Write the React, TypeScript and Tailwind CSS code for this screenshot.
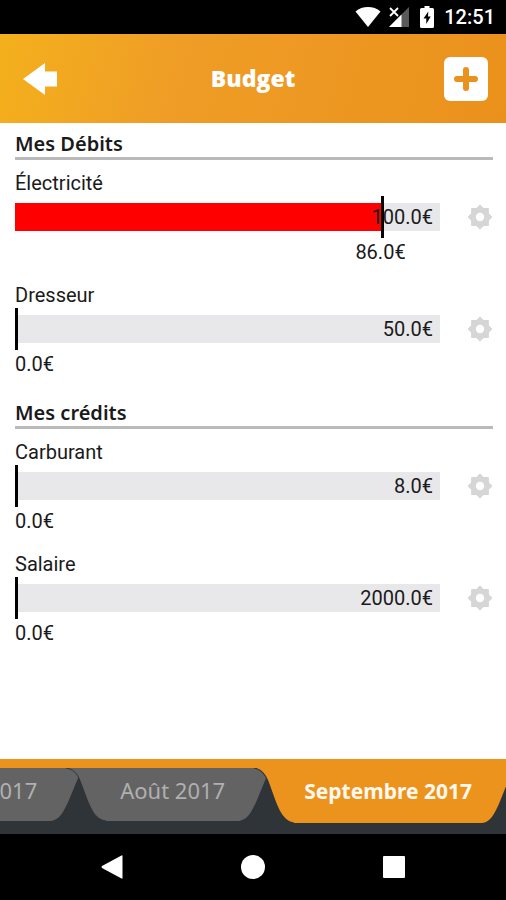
import {useState} from "react";

type Budget = {
    name: string;
    spent: number;
    limit: number;
}

const debits: Budget[] = [
    { name: "Électricité", spent: 86, limit: 100 },
    { name: "Dresseur", spent: 0, limit: 50 },
];

const credits: Budget[] = [
    { name: "Carburant", spent: 0, limit: 8 },
    { name: "Salaire", spent: 0, limit: 2000 },
];

const months = ["Juillet 2017", "Août 2017", "Septembre 2017"];

const formatAmount = (value: number) => `${value.toFixed(1)}€`;

const StatusBar = () => (
    <div className="flex h-[34px] items-center justify-end bg-black pr-[11px] text-white">
        <svg className="mr-2 h-5 w-[26px]" viewBox="0 0 26 20" fill="currentColor">
            <path d="M13 20 0.5 4.500C4 1.400 8.300 0 13 0s9 1.400 12.500 4.500z" />
        </svg>
        <svg className="mr-[11px] h-5 w-5" viewBox="0 0 20 20">
            <path d="M20 0v20H0z" fill="#5a5a5a" />
            <path d="M12.500 7.500V20H0z" fill="currentColor" />
            <path d="M-1-1h11v10H-1z" fill="#000" />
            <path d="M1 1l8 8M9 1L1 9" stroke="currentColor" strokeWidth="1.800" />
        </svg>
        <svg className="mr-[10px] h-[22px] w-[14px]" viewBox="0 0 14 22">
            <path d="M4.500 0h5v2H12.500q1.500 0 1.500 1.500V20.500q0 1.500-1.500 1.500h-11Q0 22 0 20.500V3.500Q0 2 1.500 2h3z" fill="currentColor" />
            <path d="M8.300 5.500 3.500 12.500H6.300v5.500L10.700 10.500H8z" fill="#000" />
        </svg>
        <span className="text-xl font-medium">12:51</span>
    </div>
);

const Header = () => (
    <header className="flex h-[89px] items-center justify-between bg-linear-[105deg] from-[#f4b01c] via-[#ef9d26] via-35% to-[#ea911c] px-[18px] text-white">
        <button type="button" aria-label="Retour" className="flex h-11 w-11 cursor-pointer items-center justify-center">
            <svg className="h-8 w-[34px]" viewBox="0 0 34 32" fill="currentColor">
                <path d="M0 16 22 0v8.500h12v15H22V32z" />
            </svg>
        </button>
        <h1 className="font-['Open_Sans','Noto_Sans',sans-serif] text-[23px] font-extrabold">Budget</h1>
        <button type="button" aria-label="Ajouter" className="flex h-11 w-11 cursor-pointer items-center justify-center rounded-md bg-white text-[#ea921e]">
            <svg className="h-6 w-6" viewBox="0 0 24 24" fill="none" stroke="currentColor" strokeWidth="6" strokeLinecap="round">
                <path d="M12 3v18M3 12h18" />
            </svg>
        </button>
    </header>
);

const Gear = () => (
    <svg className="h-[26px] w-[26px]" viewBox="-13 -13 26 26" fill="#d6d6d6">
        <rect x="-8.900" y="-8.900" width="17.800" height="17.800" rx="0.500" />
        <rect x="-8.900" y="-8.900" width="17.800" height="17.800" rx="0.500" transform="rotate(45)" />
        <circle r="4.200" fill="#fff" />
    </svg>
);

const BudgetRow = ({ name, spent, limit }: Budget) => {
    const percent = Math.min(100, (spent / limit) * 100);

    return (
        <li className="flex items-center gap-[27px]">
            <div className="flex-1">
                <div className="h-6 text-xl/[22px]">{name}</div>
                <div className="relative flex h-[42px] items-center">
                    <div
                        role="progressbar"
                        aria-label={name}
                        aria-valuenow={spent}
                        aria-valuemax={limit}
                        className="h-7 w-full bg-[#e8e8ea]"
                    >
                        <div className="h-full bg-[#ff0000]" style={{ width: `${percent}%` }} />
                    </div>
                    <span className="absolute right-[7px] text-xl">{formatAmount(limit)}</span>
                    <div className="absolute inset-y-0 w-[3px] bg-black" style={{ left: `${percent}%` }} />
                </div>
                <div className="flex h-7 items-center">
                    <span
                        className={percent > 0 ? "-translate-x-1/2 text-xl" : "text-xl"}
                        style={{ marginLeft: `${percent}%` }}
                    >
                        {formatAmount(spent)}
                    </span>
                </div>
            </div>
            <button type="button" aria-label={`Modifier ${name}`} className="cursor-pointer pb-1">
                <Gear />
            </button>
        </li>
    )
}

const BudgetSection = ({ title, budgets }: { title: string; budgets: Budget[] }) => (
    <section>
        <h2 className="border-b-3 border-[#bababa] font-['Noto_Sans',sans-serif] text-xl/[26px] font-semibold">{title}</h2>
        <ul className="mt-3 flex flex-col gap-[18px]">
            {budgets.map((budget) => (
                <BudgetRow key={budget.name} {...budget} />
            ))}
        </ul>
    </section>
);

const MonthTab = ({ label, active, onClick }: { label: string; active: boolean; onClick: () => void }) => (
    <button
        type="button"
        role="tab"
        aria-selected={active}
        onClick={onClick}
        className={active
            ? "-ml-[13px] flex h-[55px] shrink-0 cursor-pointer text-[21px] font-bold text-[#ec931e]"
            : "-ml-[13px] flex h-[53px] shrink-0 cursor-pointer text-[22px] text-[#636363]"}
    >
        <svg className="h-full w-10" viewBox="0 0 40 54" preserveAspectRatio="none" fill="currentColor">
            <path d="M0 0C7 1 11 5 14 13L21 32C26 45 31 53 40 54V0z" />
            <path d="M0 0C7 1 11 5 14 13L21 32C26 45 31 53 40 54" fill="none" stroke="#2f3438" />
        </svg>
        <span className={active
            ? "flex h-full items-center bg-[#ec931e] px-2.5 pb-2 text-[#fff8ee]"
            : "flex h-full items-center bg-[#636363] px-3.5 pb-2 text-[#b0b0b0]"}
        >
            {label}
        </span>
        <svg className="h-full w-7" viewBox="0 0 28 54" preserveAspectRatio="none" fill="currentColor">
            <path d="M0 54C8 53 12 46 17 35L28 8V0H0z" />
        </svg>
    </button>
);

const App = () => {
    const [month, setMonth] = useState("Septembre 2017");

    return (
        <div className="flex min-h-screen flex-col bg-white font-[Roboto,sans-serif] text-[#1a1a1a]">
            <StatusBar />
            <Header />
            <main className="flex flex-1 flex-col gap-[22px] pt-2 pr-[13px] pl-[15px]">
                <BudgetSection title="Mes Débits" budgets={debits} />
                <BudgetSection title="Mes crédits" budgets={credits} />
            </main>
            <div className="overflow-hidden border-t-9 border-[#ec931e] bg-[#2f3438]">
                <div role="tablist" className="-mr-1 flex h-[66px] items-start justify-end font-['Noto_Sans',sans-serif]">
                    {months.map((label) => (
                        <MonthTab key={label} label={label} active={label === month} onClick={() => setMonth(label)} />
                    ))}
                </div>
            </div>
            <nav className="flex h-[66px] items-center justify-center gap-[118px] bg-black text-white">
                <button type="button" aria-label="Précédent" className="cursor-pointer">
                    <svg className="h-6 w-[22px]" viewBox="0 0 22 24" fill="currentColor">
                        <path d="M21.500 1v22Q21.500 24 20.500 23.500L1 13Q0 12 1 11L20.500.500Q21.500 0 21.500 1z" />
                    </svg>
                </button>
                <button type="button" aria-label="Accueil" className="cursor-pointer">
                    <svg className="h-6 w-6" viewBox="0 0 24 24" fill="currentColor">
                        <circle cx="12" cy="12" r="12" />
                    </svg>
                </button>
                <button type="button" aria-label="Applications" className="cursor-pointer">
                    <svg className="h-[22px] w-[22px]" viewBox="0 0 22 22" fill="currentColor">
                        <rect width="22" height="22" rx="1" />
                    </svg>
                </button>
            </nav>
        </div>
    )
}

export default App;
